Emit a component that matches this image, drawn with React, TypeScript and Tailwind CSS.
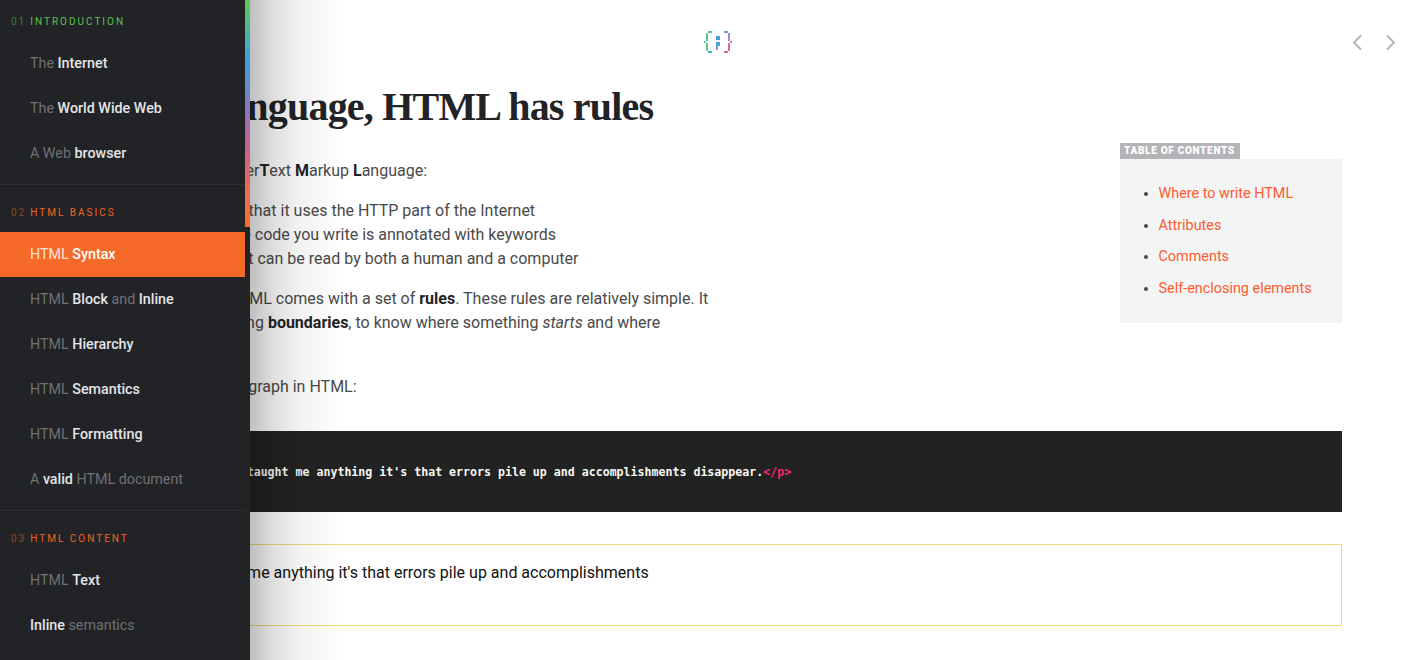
const sans = "font-['Roboto',sans-serif]";

type Seg = [string, boolean];
function NavItem({ segs, active }: { segs: Seg[]; active?: boolean }) {
  return (
    <a className={`flex h-[45px] items-center pl-[30px] text-[14.3px] ${active ? "bg-[#f56a28] text-[#ffe3d6]" : "text-[#6f7176]"}`}>
      <span className="whitespace-pre">
        {segs.map(([t, b], i) => (
          <span key={i} className={b ? (active ? "font-medium text-white" : "font-medium text-[#e4e5e6]") : ""}>{t}</span>
        ))}
      </span>
    </a>
  );
}

function Section({ num, title, green }: { num: string; title: string; green?: boolean }) {
  return (
    <div className={`flex text-[10px] leading-[12px] tracking-[2px] pl-[11px] ${green ? "h-[41px] pt-[16px] text-[#5cc24f]" : "h-[47px] pt-[22px] text-[#f0641f]"}`}>
      <span className={`mr-[4px] ${green ? "text-[#3f7a38]" : "text-[#8c4a28]"}`}>{num}</span>
      <span>{title}</span>
    </div>
  );
}

function Logo() {
  const r: [number, number, number, number, string][] = [
    [708, 31, 4, 2, "#4cc4a4"], [706, 33, 2, 8, "#52c79a"], [704, 41, 2, 2, "#55c98f"], [706, 43, 2, 8, "#5cc98a"], [708, 51, 4, 2, "#3fb6c8"],
    [716, 36, 4, 4, "#3f9fdc"], [716, 42, 4, 4, "#4fa2dc"], [716, 46, 2, 2, "#6d9fdc"], [716, 48, 2, 2, "#9a8fd0"],
    [724, 31, 4, 2, "#5d9fdc"], [728, 33, 2, 8, "#9a8fd0"], [730, 41, 2, 2, "#c27ab8"], [728, 43, 2, 8, "#d86a9c"], [724, 51, 4, 2, "#e0648f"],
  ];
  return (
    <svg width="28" height="22" viewBox="704 31 28 22" className="block">
      {r.map(([x, y, w, h, c], i) => <rect key={i} x={x} y={y} width={w} height={h} fill={c} />)}
    </svg>
  );
}

export default function App() {
  return (
    <div className={`relative h-[660px] w-[1403px] overflow-hidden bg-white text-[16px] text-[#4a4a4a] ${sans}`}>
      {/* page */}
      <header className="relative h-[85px]">
        <div className="flex justify-center pt-[31px] pl-[32px]"><Logo /></div>
        <div className="absolute right-[3px] top-[31px] flex gap-[12px]">
          <svg width="20" height="22" viewBox="0 0 20 22" fill="none" stroke="#b4b5b7" strokeWidth="2"><path d="M13 4.5 6 11.5l7 7" /></svg>
          <svg width="20" height="22" viewBox="0 0 20 22" fill="none" stroke="#b4b5b7" strokeWidth="2"><path d="m7 4.5 7 7-7 7" /></svg>
        </div>
      </header>

      <main className="ml-[54px] mr-[61px]">
        <h1 className="h-[44px] pl-[10px] font-['Liberation_Serif',serif] text-[40px] font-bold leading-[44px] tracking-[-0.8px] text-[#222326]">Like any language, HTML has rules</h1>
        <div className="float-right mt-[14px] w-[222px]">
          <div className="h-[16px] w-[120px] whitespace-nowrap bg-[#b4b4b8] pl-[4px] text-[10px] font-black leading-[16px] tracking-[0.7px] text-white">TABLE OF CONTENTS</div>
          <ul className="h-[164px] list-disc bg-[#f3f5f4] pt-[19px] pl-[38.5px] text-[14.4px] leading-[31.6px] text-[#ff5a30] marker:text-[#4a4a4a]">
            <li>Where to write HTML</li>
            <li>Attributes</li>
            <li>Comments</li>
            <li>Self-enclosing elements</li>
          </ul>
        </div>
        <div className="w-[680px] pt-[30px] leading-[24px]">
          <p className="pl-[40px]">HTML stands for <b className="text-[#222326]">H</b>yper<b className="text-[#222326]">T</b>ext <b className="text-[#222326]">M</b>arkup <b className="text-[#222326]">L</b>anguage:</p>
          <p className="mt-[16px] pl-[66px]">HyperText means that it uses the HTTP part of the Internet</p>
          <p className="pl-[64px]">Markup means the code you write is annotated with keywords</p>
          <p className="pl-[64px]">Language means it can be read by both a human and a computer</p>
          <p className="mt-[16px] pl-[40px]">Like any language, HTML comes with a set of <b className="text-[#222326]">rules</b>. These rules are relatively simple. It</p>
          <p className="pl-[28px]">mostly consists in setting <b className="text-[#222326]">boundaries</b>, to know where something <i>starts</i> and where</p>
          <p className="pl-[28px]">something ends.</p>
          <p className="mt-[16px] pl-[1px]">Here is how to make a paragraph in HTML:</p>
        </div>
        <pre className="clear-both mt-[32px] h-[81px] bg-[#222222] pt-[31px] pl-[74px] font-['DejaVu_Sans_Mono',monospace] text-[11.6px] font-bold leading-[20px] text-[#f8f8f2]"><span className="text-[#f92672]">&lt;p&gt;</span>If Tetris has taught me anything it's that errors pile up and accomplishments disappear.<span className="text-[#f92672]">&lt;/p&gt;</span></pre>
        <blockquote className="mt-[32px] h-[82px] w-full border border-[#f2d974] pt-[16px] pl-[55px] text-[#111111]">
          <p className="w-[560px] leading-[24px]">If Tetris has taught me anything it's that errors pile up and accomplishments disappear.</p>
        </blockquote>
        <h2 className="mt-[27px] pl-[66px] font-['Liberation_Serif',serif] text-[30px] font-bold leading-[36px] text-[#222326]">Where to write HTML</h2>
      </main>

      {/* sidebar overlay */}
      <div className="absolute left-[250px] top-0 h-full w-[92px] bg-[linear-gradient(to_right,rgba(0,0,0,0.25),rgba(0,0,0,0.12)_25px,rgba(0,0,0,0.05)_50px,transparent)]" />
      <aside className="absolute left-0 top-0 h-full w-[250px] bg-[#212326]">
        <div className="absolute right-0 top-0 h-[227px] w-[5px] bg-[linear-gradient(to_bottom,#5fc95a,#3a9fdc_27%,#c0609a_62%,#ef6a50_85%,#f76b28)]" />
        <div className="w-[245px]">
          <Section num="01" title="INTRODUCTION" green />
          <NavItem segs={[["The ", false], ["Internet", true]]} />
          <NavItem segs={[["The ", false], ["World Wide Web", true]]} />
          <NavItem segs={[["A Web ", false], ["browser", true]]} />
          <div className="mt-[8px] h-[1px] bg-[#2d2f32]" />
          <Section num="02" title="HTML BASICS" />
          <NavItem segs={[["HTML ", false], ["Syntax", true]]} active />
          <NavItem segs={[["HTML ", false], ["Block", true], [" and ", false], ["Inline", true]]} />
          <NavItem segs={[["HTML ", false], ["Hierarchy", true]]} />
          <NavItem segs={[["HTML ", false], ["Semantics", true]]} />
          <NavItem segs={[["HTML ", false], ["Formatting", true]]} />
          <NavItem segs={[["A ", false], ["valid", true], [" HTML document", false]]} />
          <div className="mt-[8px] h-[1px] bg-[#2d2f32]" />
          <Section num="03" title="HTML CONTENT" />
          <NavItem segs={[["HTML ", false], ["Text", true]]} />
          <NavItem segs={[["Inline", true], [" semantics", false]]} />
        </div>
      </aside>
    </div>
  );
}
